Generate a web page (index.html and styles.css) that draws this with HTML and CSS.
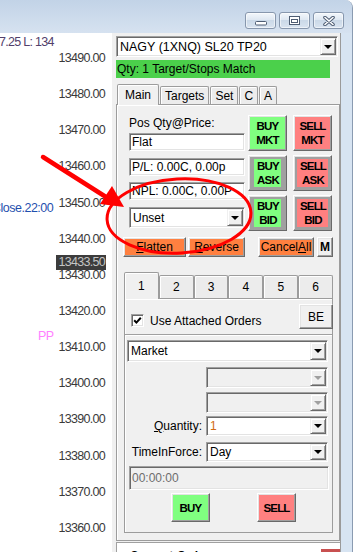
FILE: index.html
```html
<!DOCTYPE html>
<html lang="en">
<head>
  <meta charset="UTF-8">
  <meta name="viewport" content="width=device-width, initial-scale=1.0">
  <title>Order Entry</title>
  <link rel="stylesheet" href="styles.css">
</head>
<body>
  <div class="screen">
    <div class="window">
      <div class="titlebar">
        <span class="cap-btn">
          <svg class="ico-min" width="12" height="5" viewBox="0 0 12 5"><rect x="0.5" y="0.5" width="11" height="3.5" rx="1" fill="#fff" stroke="#4e5d73"/></svg>
        </span>
        <span class="cap-btn">
          <svg width="11" height="9" viewBox="0 0 11 9"><rect x="0.5" y="0.5" width="10" height="8" fill="#fff" stroke="#4e5d73"/><rect x="2.5" y="3.5" width="6" height="3" fill="none" stroke="#4e5d73"/></svg>
        </span>
        <span class="cap-btn">
          <svg width="12" height="10" viewBox="0 0 12 10"><path d="M2 1.5 L10 8.5 M10 1.5 L2 8.5" stroke="#4e5d73" stroke-width="3.6" stroke-linecap="round"/><path d="M2 1.5 L10 8.5 M10 1.5 L2 8.5" stroke="#fff" stroke-width="1.6" stroke-linecap="round"/></svg>
        </span>
      </div>

      <div class="frame-body">
        <div class="chart">
          <div class="chart-info">7.25 L: 134</div>
          <div class="axis">
            <span>13490.00</span>
            <span>13480.00</span>
            <span>13470.00</span>
            <span>13460.00</span>
            <span>13450.00</span>
            <span>13440.00</span>
            <span>13430.00</span>
            <span>13420.00</span>
            <span>13410.00</span>
            <span>13400.00</span>
            <span>13390.00</span>
            <span>13380.00</span>
            <span>13370.00</span>
            <span>13360.00</span>
          </div>
          <div class="close-line">Close.22:00</div>
          <div class="pivot">PP</div>
          <div class="last-price">13433.50</div>
        </div>

        <div class="client">
          <div class="combo account-combo">
            <span class="combo-text">NAGY (1XNQ) SL20 TP20</span>
            <span class="drop"><i></i></span>
          </div>
          <div class="status-bar">Qty: 1 Target/Stops Match</div>

          <div class="tab-strip main-tabs">
            <span class="tab active">Main</span>
            <span class="tab">Targets</span>
            <span class="tab">Set</span>
            <span class="tab">C</span>
            <span class="tab">A</span>
          </div>

          <div class="tab-panel main-panel">
            <div class="position-area">
              <div class="pos-col">
                <div class="pos-label">Pos Qty@Price:</div>
                <div class="edit flat-box">Flat</div>
                <div class="edit pl-box">P/L: 0.00C, 0.00p</div>
                <div class="edit npl-box">NPL: 0.00C, 0.00P</div>
                <div class="combo unset-combo">
                  <span class="combo-text">Unset</span>
                  <span class="drop"><i></i></span>
                </div>
              </div>
              <div class="quick-grid">
                <button class="btn quick buy">BUY<br>MKT</button>
                <button class="btn quick sell">SELL<br>MKT</button>
                <button class="btn quick gray"><span class="hl buy">BUY<br>ASK</span></button>
                <button class="btn quick gray"><span class="hl sell">SELL<br>ASK</span></button>
                <button class="btn quick gray"><span class="hl buy">BUY<br>BID</span></button>
                <button class="btn quick gray"><span class="hl sell">SELL<br>BID</span></button>
              </div>
            </div>

            <div class="action-row">
              <button class="btn orange flatten"><u>F</u>latten</button>
              <button class="btn orange reverse"><u>R</u>everse</button>
              <button class="btn gray cancel-all"><span class="hl orange">Cancel<u>A</u>ll</span></button>
              <button class="btn m-btn">M</button>
            </div>

            <div class="tab-strip num-tabs">
              <span class="tab active">1</span>
              <span class="tab">2</span>
              <span class="tab">3</span>
              <span class="tab">4</span>
              <span class="tab">5</span>
              <span class="tab">6</span>
            </div>

            <div class="tab-panel inner-panel">
              <div class="attach-row">
                <label class="check">
                  <span class="check-box"><svg width="9" height="9" viewBox="0 0 9 9"><polyline points="1.2,4.2 3.4,6.6 7.8,1.8" fill="none" stroke="#000" stroke-width="2"/></svg></span>
                  Use Attached Orders
                </label>
                <button class="btn be-btn">BE</button>
              </div>

              <div class="order-box">
                <div class="combo market-combo">
                  <span class="combo-text">Market</span>
                  <span class="drop"><i></i></span>
                </div>
                <div class="field-row gap5">
                  <span class="field-label"></span>
                  <div class="combo disabled field-combo"><span class="combo-text"></span><span class="drop"><i></i></span></div>
                </div>
                <div class="field-row gap4">
                  <span class="field-label"></span>
                  <div class="combo disabled field-combo"><span class="combo-text"></span><span class="drop"><i></i></span></div>
                </div>
                <div class="field-row gap3 short">
                  <span class="field-label"><u>Q</u>uantity:</span>
                  <div class="combo field-combo"><span class="combo-text qty">1</span><span class="drop"><i></i></span></div>
                </div>
                <div class="field-row gap6 short">
                  <span class="field-label">TimeInForce:</span>
                  <div class="combo field-combo"><span class="combo-text">Day</span><span class="drop"><i></i></span></div>
                </div>
                <div class="edit disabled time-box">00:00:00</div>
                <div class="order-btns">
                  <button class="btn quick buy">BUY</button>
                  <button class="btn quick sell">SELL</button>
                </div>
              </div>
            </div>
          </div>

          <div class="orders-panel">
            <span class="orders-title">Current Orders</span>
            <span class="orders-close"></span>
          </div>
        </div>
      </div>
    </div>

    <svg class="annotation" width="359" height="552" viewBox="0 0 359 552">
      <line x1="43" y1="157" x2="106" y2="197" stroke="#f00" stroke-width="4.5" stroke-linecap="round"/>
      <polygon points="124,207 100,204 112,186" fill="#f00"/>
      <ellipse cx="179" cy="216" rx="72" ry="37" fill="none" stroke="#f00" stroke-width="3" transform="rotate(-3 179 216)"/>
    </svg>
  </div>
</body>
</html>
```

FILE: styles.css
```css
* {
  box-sizing: border-box;
}

body {
  margin: 0;
  background: #fff;
  font: 12px/14px "Liberation Sans", Arial, sans-serif;
  color: #000;
}

.screen {
  position: relative;
  width: 359px;
  height: 552px;
  overflow: hidden;
}

/* window frame */
.window {
  width: 353px;
  height: 552px;
  display: flex;
  flex-direction: column;
  background: #d7e4f2;
  border-right: 1px solid #8a9bb1;
  border-top-right-radius: 8px;
  overflow: hidden;
}

.titlebar {
  height: 33px;
  flex: none;
  display: flex;
  justify-content: flex-end;
  align-items: flex-start;
  gap: 3px;
  padding: 12px 8px 0 0;
  background: linear-gradient(#c2d3e7, #d6e2f0);
}

.cap-btn {
  width: 31px;
  height: 17px;
  display: flex;
  align-items: center;
  justify-content: center;
  border: 1px solid #8797ad;
  border-radius: 3px;
  background: linear-gradient(#f3f7fb, #dfe8f2 45%, #cbd9e8 50%, #d9e4f0);
  box-shadow: inset 0 0 0 1px rgba(255, 255, 255, 0.55);
}

.ico-min {
  margin-top: 5px;
}

.frame-body {
  flex: 1;
  display: flex;
  min-height: 0;
}

/* chart on the left */
.chart {
  width: 112px;
  flex: none;
  position: relative;
  overflow: hidden;
  background: #fff;
  font: 12.5px/14px "Liberation Sans", Arial, sans-serif;
  letter-spacing: -0.7px;
  color: #3a3a3a;
}

.axis {
  display: flex;
  flex-direction: column;
  align-items: flex-end;
  padding: 7px 7px 0 0;
}

.axis span {
  height: 36.15px;
  line-height: 36px;
}

.chart-info {
  position: absolute;
  left: -1px;
  top: 2px;
  color: #52406b;
}

.close-line {
  position: absolute;
  left: -8px;
  top: 168px;
  color: #1f4fae;
  letter-spacing: -0.5px;
}

.pivot {
  position: absolute;
  left: 38px;
  top: 296px;
  color: #ff80ff;
}

.last-price {
  position: absolute;
  right: 6px;
  top: 222px;
  height: 15px;
  line-height: 15px;
  padding: 0 1px 0 2px;
  background: #3c3c3c;
  color: #c4c4c4;
}

/* dialog client area */
.client {
  width: 229px;
  flex: none;
  background: #f0f0f0;
  border-right: 1px solid #9a9a9a;
  padding: 3px 0 0 4px;
  overflow: hidden;
}

.combo {
  display: flex;
  height: 21px;
  padding: 1px;
  background: #fff;
  border: 1px solid;
  border-color: #a0a0a0 #fff #fff #a0a0a0;
  box-shadow: inset 1px 1px #696969, inset -1px -1px #e3e3e3;
}

.combo-text {
  flex: 1;
  padding-left: 2px;
  white-space: nowrap;
  overflow: hidden;
  display: flex;
  align-items: center;
}

.drop {
  width: 16px;
  flex: none;
  display: flex;
  align-items: center;
  justify-content: center;
  background: #f0f0f0;
  border: 1px solid;
  border-color: #f0f0f0 #696969 #696969 #f0f0f0;
  box-shadow: inset 1px 1px #fff, inset -1px -1px #a0a0a0;
}

.drop i {
  width: 0;
  height: 0;
  border-left: 4px solid transparent;
  border-right: 4px solid transparent;
  border-top: 4px solid #000;
}

.combo.disabled {
  background: #f0f0f0;
}

.combo.disabled .drop i {
  border-top-color: #a0a0a0;
}

.account-combo {
  width: 222px;
  font-size: 12.5px;
}

.status-bar {
  width: 214px;
  height: 18px;
  margin-top: 3px;
  padding-left: 1px;
  line-height: 18px;
  background: #4bd04b;
}

/* tabs */
.tab-strip {
  display: flex;
  align-items: flex-end;
}

.tab {
  position: relative;
  display: flex;
  align-items: center;
  justify-content: center;
  background: #ececec;
  border: 1px solid #9c9c9c;
  border-bottom: 0;
  border-radius: 2px 2px 0 0;
  box-shadow: inset 1px 1px #fff;
}

.tab.active {
  background: #f0f0f0;
  z-index: 1;
  margin-bottom: -1px;
}

.main-tabs {
  height: 20px;
  margin-top: 6px;
  padding-left: 1px;
}

.main-tabs .tab {
  height: 18px;
  padding: 0 4px;
  margin-left: 1px;
}

.main-tabs .tab.active {
  height: 21px;
  padding: 0 7px;
  margin-left: 0;
}

.tab-panel {
  background: #f0f0f0;
  border: 1px solid #9c9c9c;
  box-shadow: inset 1px 1px #fff;
}

.main-panel {
  width: 224px;
  height: 437px;
}

.position-area {
  display: flex;
  padding-left: 12px;
}

.pos-col {
  width: 116px;
  display: flex;
  flex-direction: column;
  padding-top: 11px;
}

.pos-label {
  height: 14px;
}

.edit {
  height: 18px;
  padding: 1px 2px;
  background: #fff;
  border: 1px solid;
  border-color: #a0a0a0 #fff #fff #a0a0a0;
  box-shadow: inset 1px 1px #696969, inset -1px -1px #e3e3e3;
  white-space: nowrap;
  overflow: hidden;
}

.flat-box {
  margin-top: 3px;
}

.pl-box {
  margin-top: 7px;
}

.npl-box {
  margin-top: 6px;
}

.unset-combo {
  margin-top: 7px;
}

.quick-grid {
  display: grid;
  grid-template-columns: 39px 39px;
  grid-auto-rows: 36px;
  column-gap: 6px;
  row-gap: 4px;
  margin-left: 3px;
  padding-top: 10px;
}

/* buttons */
.btn {
  margin: 0;
  padding: 0;
  font: inherit;
  line-height: 14px;
  color: #000;
  background: #f0f0f0;
  border: 1px solid;
  border-color: #fff #696969 #696969 #fff;
  box-shadow: inset -1px -1px #a0a0a0, inset 1px 1px #e3e3e3;
  display: flex;
  align-items: center;
  justify-content: center;
  text-align: center;
}

.quick {
  font: bold 11.5px/14px "Liberation Sans", Arial, sans-serif;
  letter-spacing: -0.8px;
}

.buy {
  background: #80ff80;
}

.sell {
  background: #ff8080;
}

.orange {
  background: #ff8040;
}

.btn.gray {
  background: #a0a0a0;
}

.hl {
  display: inline-block;
  padding: 0 2px 0 3px;
}

.action-row {
  display: flex;
  height: 20px;
  margin-top: 6px;
  padding-left: 6px;
}

.flatten {
  width: 63px;
}

.reverse {
  width: 57px;
  margin-left: 2px;
}

.cancel-all {
  width: 56px;
  margin-left: 13px;
}

.cancel-all .hl {
  line-height: 15px;
  padding: 0 1px;
}

.m-btn {
  width: 16px;
  margin-left: 3px;
  font-weight: bold;
}

.num-tabs {
  width: 209px;
  height: 26px;
  margin: 15px 0 0 7px;
}

.num-tabs .tab {
  flex: 1;
  height: 23px;
}

.num-tabs .tab.active {
  height: 27px;
}

.inner-panel {
  width: 209px;
  height: 235px;
  margin-left: 7px;
}

.attach-row {
  display: flex;
  align-items: flex-start;
  height: 30px;
  padding: 5px 0 0 6px;
}

.check {
  display: flex;
  align-items: center;
  height: 13px;
  margin-top: 10px;
}

.check-box {
  width: 13px;
  height: 13px;
  margin-right: 6px;
  display: flex;
  align-items: center;
  justify-content: center;
  background: #fff;
  border: 1px solid;
  border-color: #a0a0a0 #fff #fff #a0a0a0;
  box-shadow: inset 1px 1px #696969, inset -1px -1px #e3e3e3;
}

.be-btn {
  width: 34px;
  height: 25px;
  margin-left: auto;
  margin-right: -1px;
}

.order-box {
  margin-top: 5px;
  padding-left: 2px;
  border-top: 1px solid #a0a0a0;
  box-shadow: inset 0 1px #fff;
}

.market-combo {
  width: 201px;
  height: 22px;
  margin-top: 5px;
}

.field-row {
  display: flex;
  align-items: center;
  gap: 4px;
}

.field-row.gap5 {
  margin-top: 5px;
}

.field-row.gap4 {
  margin-top: 4px;
}

.field-row.gap3 {
  margin-top: 3px;
}

.field-row.gap6 {
  margin-top: 6px;
}

.field-label {
  width: 75px;
  text-align: right;
  white-space: nowrap;
}

.field-combo {
  width: 122px;
}

.short .field-combo {
  height: 20px;
}

.qty {
  color: #d06a10;
}

.time-box {
  width: 200px;
  height: 24px;
  margin: 4px 0 0 2px;
  padding-top: 4px;
  background: #f0f0f0;
  color: #6d6d6d;
}

.order-btns {
  display: flex;
  margin-top: 3px;
  padding-left: 44px;
}

.order-btns .btn {
  width: 39px;
  height: 29px;
}

.order-btns .sell {
  margin-left: 47px;
}

.orders-panel {
  display: flex;
  align-items: flex-start;
  height: 20px;
  margin: 1px 0 0 0;
  padding: 6px 0 0 13px;
  background: #fff;
  border-top: 1px solid #a0a0a0;
  border-left: 1px solid #a0a0a0;
}

.orders-title {
  font-weight: bold;
}

.orders-close {
  width: 19px;
  height: 12px;
  margin: 0 0 0 auto;
  background: #c85050;
}

/* red annotation drawn over the screenshot */
.annotation {
  position: absolute;
  left: 0;
  top: 0;
  pointer-events: none;
}
```
